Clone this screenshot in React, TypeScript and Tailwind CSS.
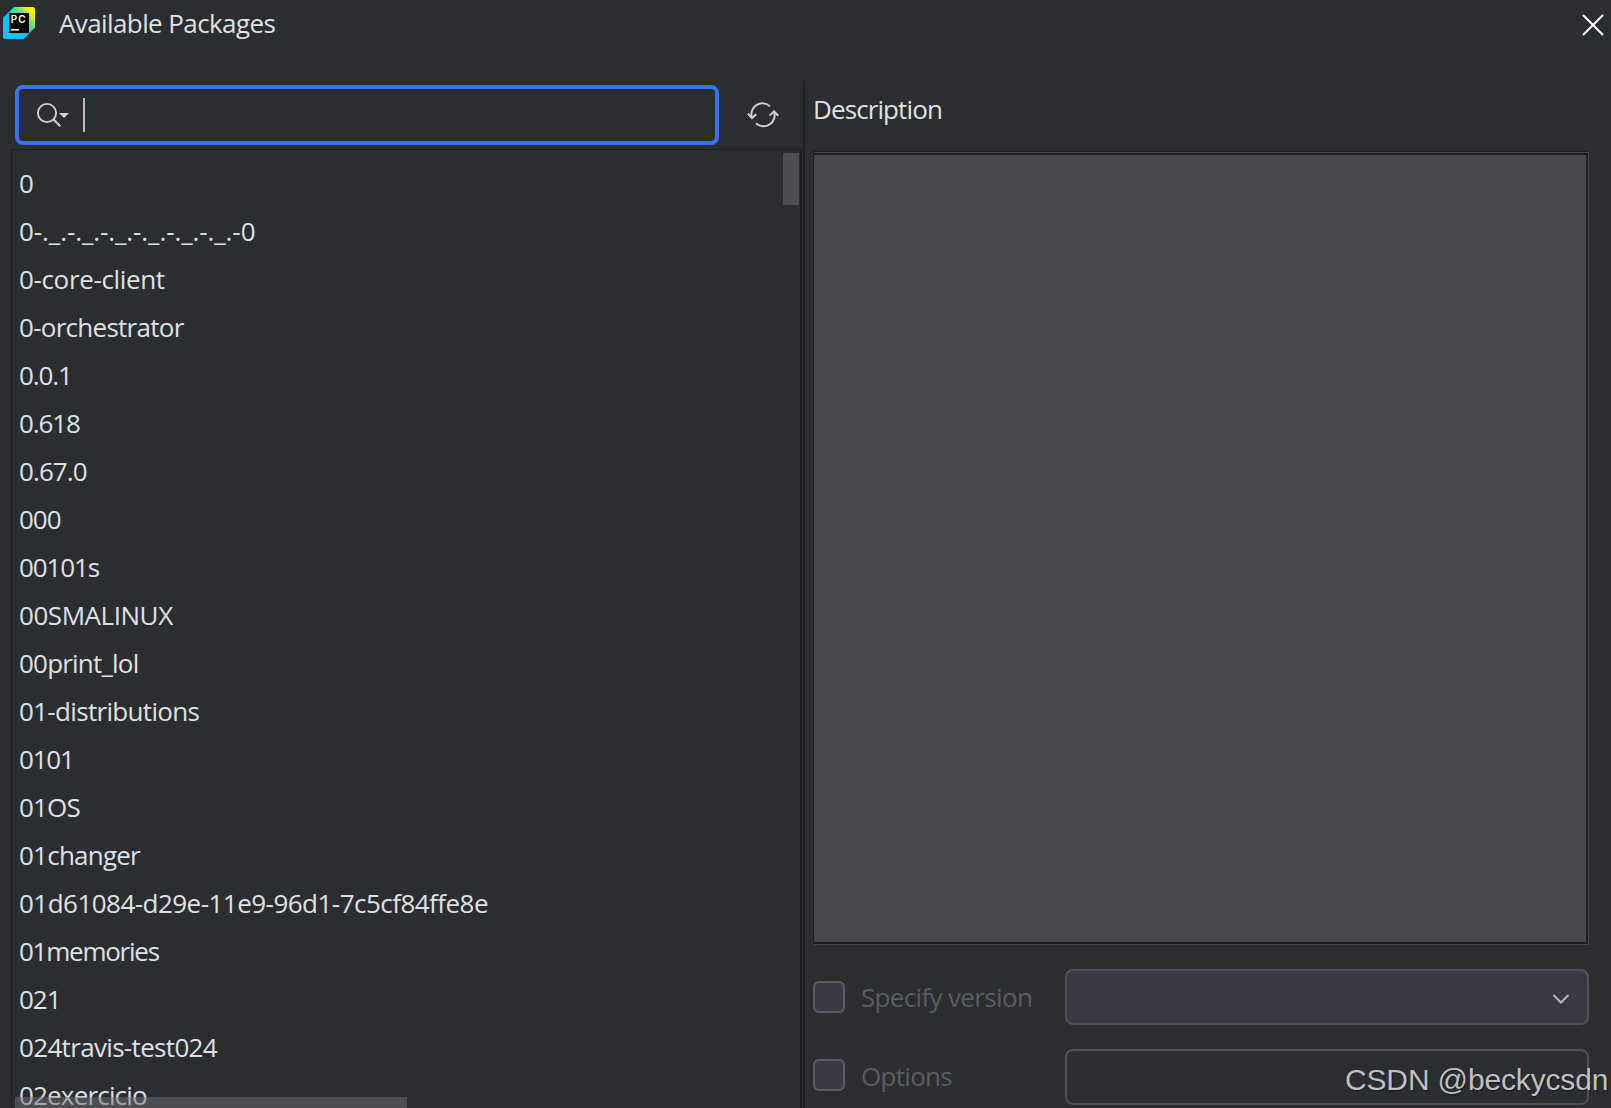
import clsx from 'clsx';

type PackageRow = {
  name: string;
  tracking?: string;
};

const PACKAGES: PackageRow[] = [
  { name: '0' },
  { name: '0-._.-._.-._.-._.-._.-._.-0', tracking: 'tracking-[-0.08px]' },
  { name: '0-core-client', tracking: 'tracking-[-0.36px]' },
  { name: '0-orchestrator', tracking: 'tracking-[-0.73px]' },
  { name: '0.0.1', tracking: 'tracking-[-1.1px]' },
  { name: '0.618', tracking: 'tracking-[-1.1px]' },
  { name: '0.67.0', tracking: 'tracking-[-0.9px]' },
  { name: '000', tracking: 'tracking-[-1px]' },
  { name: '00101s', tracking: 'tracking-[-1.1px]' },
  { name: '00SMALINUX', tracking: 'tracking-[-0.45px]' },
  { name: '00print_lol', tracking: 'tracking-[-0.8px]' },
  { name: '01-distributions', tracking: 'tracking-[-0.68px]' },
  { name: '0101', tracking: 'tracking-[-1.2px]' },
  { name: '01OS', tracking: 'tracking-[-0.85px]' },
  { name: '01changer', tracking: 'tracking-[-0.77px]' },
  { name: '01d61084-d29e-11e9-96d1-7c5cf84ffe8e', tracking: 'tracking-[-0.53px]' },
  { name: '01memories', tracking: 'tracking-[-1.25px]' },
  { name: '021', tracking: 'tracking-[-1px]' },
  { name: '024travis-test024', tracking: 'tracking-[-0.67px]' },
  { name: '02exercicio', tracking: 'tracking-[-0.82px]' },
];

function AppIcon() {
  return (
    <svg width="32" height="32" viewBox="0 0 32 32" className="shrink-0">
      <defs>
        <linearGradient id="pc-edge" x1="6" y1="26" x2="30" y2="4" gradientUnits="userSpaceOnUse">
          <stop offset="0.2" stopColor="#07c3f2" />
          <stop offset="0.62" stopColor="#4fd6a0" />
          <stop offset="0.95" stopColor="#fcf013" />
        </linearGradient>
      </defs>
      <path d="M11 0H30.5L32 1.5V20.5L20.5 32H1.5L0 30.5V11Z" fill="url(#pc-edge)" />
      <path d="M0 11L6 5V26H26L20.5 32H1.5L0 30.5Z" fill="#00c8fa" />
      <rect x="6" y="6" width="20" height="20" fill="#000" />
      <rect x="8" y="22" width="8" height="1.6" fill="#fff" />
      <text x="7.8" y="16" fontSize="10" fontWeight="600" fontFamily="Inter, sans-serif" fill="#fff" textLength="14.8">
        PC
      </text>
    </svg>
  );
}

function SearchIcon() {
  return (
    <svg width="34" height="26" viewBox="0 0 34 26" fill="none" className="shrink-0">
      <circle cx="11" cy="11" r="9.1" stroke="#ced0d6" strokeWidth="1.9" />
      <path d="M17.3 17.3L24.3 24.3" stroke="#ced0d6" strokeWidth="2" />
      <path d="M23 11H33L28 16Z" fill="#ced0d6" />
    </svg>
  );
}

function RefreshIcon() {
  return (
    <svg width="32" height="26" viewBox="0 0 32 26" fill="none" stroke="#ced0d6" strokeWidth="2" className="shrink-0">
      <path d="M23 4.4A11 11 0 0 0 5 16" />
      <path d="M0.9 11.6L5 16L9.3 12.2" />
      <path d="M9 21.2A11 11 0 0 0 27 9.6" />
      <path d="M22.6 13.6L27 9.4L31.2 13.8" />
    </svg>
  );
}

function Checkbox() {
  return <div className="size-8 shrink-0 rounded-[6px] border-2 border-[#5a5d63] bg-[#393a3f]" />;
}

function PackageList() {
  return (
    <div className="relative mt-1 ml-[11px] h-[959px] overflow-hidden border-t border-l border-[#1e1f22]">
      <ul className="pt-[9px] pl-[7px]">
        {PACKAGES.map((row) => (
          <li key={row.name} className={clsx('h-12 text-[26px] leading-[48px] whitespace-pre', row.tracking)}>
            {row.name}
          </li>
        ))}
      </ul>
      <div className="absolute top-[3px] right-px h-[52px] w-4 bg-[#4d4e51]" />
      <div className="absolute bottom-0 left-[3px] h-[11px] w-[392px] bg-[#6f7073]/50" />
    </div>
  );
}

function PackagesPane() {
  return (
    <section className="w-[800px] shrink-0 pt-1">
      <div className="flex h-[60px] items-center pl-[15px]">
        <div className="flex h-[60px] w-[704px] items-center rounded-[8px] border-4 border-[#3574f0] pl-[17px]">
          <SearchIcon />
          <div className="ml-[13px] h-[34px] w-0.5 bg-[#bbbbb8]" />
        </div>
        <div className="ml-7">
          <RefreshIcon />
        </div>
      </div>
      <PackageList />
    </section>
  );
}

function DescriptionPane() {
  return (
    <section className="flex flex-col pl-2">
      <h2 className="h-[70px] text-[26px] leading-[56px] tracking-[-0.9px]">Description</h2>
      <div className="h-[794px] w-[776px] border-t border-r border-b border-l border-t-[#1e1f22] border-r-[#45484a] border-b-[#45484a] border-l-[#1e1f22]">
        <div className="h-full border-t border-[#45484a]">
          <div className="h-full border-t-2 border-r-2 border-b-2 border-[#1e1f22] bg-[#45494a]" />
        </div>
      </div>
      <div className="mt-6 flex h-14 items-center text-[#5a5d63]">
        <div className="flex w-[252px] items-center gap-4 pb-px">
          <Checkbox />
          <span className="pt-px text-[26px] leading-8 tracking-[-0.66px] whitespace-nowrap">Specify version</span>
        </div>
        <div className="flex h-14 w-[524px] items-center justify-end rounded-[8px] border-2 border-[#4e5157] bg-[#393a3f] pt-[3px] pr-[17px]">
          <svg width="18" height="12" viewBox="0 0 18 12" fill="none">
            <path d="M1.5 2L9 9.5L16.5 2" stroke="#b4b8bf" strokeWidth="2" />
          </svg>
        </div>
      </div>
      <div className="mt-6 flex h-14 items-center text-[#5a5d63]">
        <div className="flex w-[252px] items-center gap-4 pb-1">
          <Checkbox />
          <span className="pt-px text-[26px] leading-8 tracking-[-0.7px]">Options</span>
        </div>
        <div className="h-14 w-[524px] rounded-[8px] border-2 border-[#4e5157]" />
      </div>
    </section>
  );
}

export default function App() {
  return (
    <div className="relative h-[1108px] w-[1611px] overflow-hidden bg-[#2b2d30] font-['Open_Sans',sans-serif] text-[#dfe1e5]">
      <header className="flex h-[81px] items-start pl-[3px]">
        <div className="pt-[7px]">
          <AppIcon />
        </div>
        <h1 className="ml-6 text-[26px] leading-[47px] tracking-[-0.6px]">Available Packages</h1>
        <svg width="22" height="22" viewBox="0 0 22 22" fill="none" className="mt-[14px] mr-[7px] ml-auto">
          <path d="M1 1L21 21M21 1L1 21" stroke="#fff" strokeWidth="2" />
        </svg>
      </header>
      <main className="flex h-[1027px]">
        <PackagesPane />
        <div className="mt-[68px] w-0.5 bg-[#1e1f22]" />
        <div className="ml-px w-0.5 bg-[#1e1f22]" />
        <DescriptionPane />
      </main>
      <div className="absolute top-[1057px] left-[1345px] font-['Liberation_Sans',sans-serif] text-[30px] leading-[46px] tracking-[-0.15px] whitespace-nowrap text-[#bfc0c1] [text-shadow:1px_1px_1px_rgba(0,0,0,0.5)]">
        CSDN @beckycsdn
      </div>
    </div>
  );
}
